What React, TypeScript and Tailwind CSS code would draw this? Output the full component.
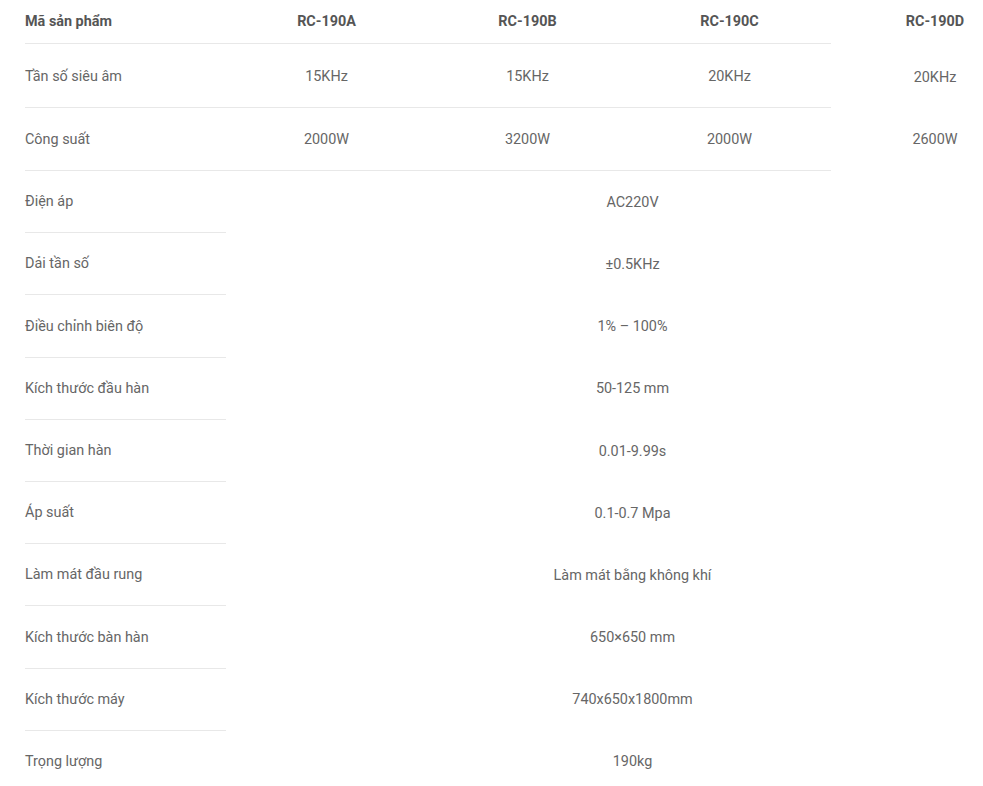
import React from "react";

const cols = "grid grid-cols-[201px_201px_201px_203px_208px]";
const font = { fontFamily: "Roboto, 'Noto Sans', sans-serif" };

const split: [string, string[], string][] = [
  ["Tần số siêu âm", ["15KHz", "15KHz", "20KHz", "20KHz"], "h-[64px]"],
  ["Công suất", ["2000W", "3200W", "2000W", "2600W"], "h-[63px]"],
];

const merged: [string, string][] = [
  ["Điện áp", "AC220V"],
  ["Dải tần số", "±0.5KHz"],
  ["Điều chỉnh biên độ", "1% – 100%"],
  ["Kích thước đầu hàn", "50-125 mm"],
  ["Thời gian hàn", "0.01-9.99s"],
  ["Áp suất", "0.1-0.7 Mpa"],
  ["Làm mát đầu rung", "Làm mát bằng không khí"],
  ["Kích thước bàn hàn", "650×650 mm"],
  ["Kích thước máy", "740x650x1800mm"],
  ["Trọng lượng", "190kg"],
];

export default function App() {
  return (
    <div className="w-[983px] h-[786px] overflow-hidden bg-white" style={font}>
      <div className="pl-[25px] w-[1100px] text-[14.4px] text-[#666]">
        <div className={`${cols} h-[44px] font-bold text-[#555]`}>
          <div className="flex items-center border-b border-[#e8e8e8]">Mã sản phẩm</div>
          {["RC-190A", "RC-190B", "RC-190C"].map((m) => (
            <div key={m} className="flex items-center justify-center border-b border-[#e8e8e8]">
              {m}
            </div>
          ))}
          <div className="flex items-center justify-center">RC-190D</div>
        </div>
        {split.map(([label, vals, h], r) => (
          <div key={label} className={`${cols} ${h}`}>
            <div className="flex items-center pt-[2px] border-b border-[#e8e8e8]">{label}</div>
            {vals.slice(0, 3).map((v, i) => (
              <div key={i} className="flex items-center justify-center pt-[2px] border-b border-[#e8e8e8]">
                {v}
              </div>
            ))}
            <div className={`flex items-center justify-center ${r === 0 ? "pt-[3px]" : "pt-[1px]"}`}>{vals[3]}</div>
          </div>
        ))}
        {merged.map(([label, v], i) => (
          <div key={label} className={`${cols} h-[62.2px]`}>
            <div
              className={`flex items-center pt-[1px] ${
                i < merged.length - 1 ? "border-b border-[#e8e8e8]" : ""
              }`}
            >
              {label}
            </div>
            <div className="col-span-4 flex items-center justify-center pt-[1px]">{v}</div>
          </div>
        ))}
      </div>
    </div>
  );
}
